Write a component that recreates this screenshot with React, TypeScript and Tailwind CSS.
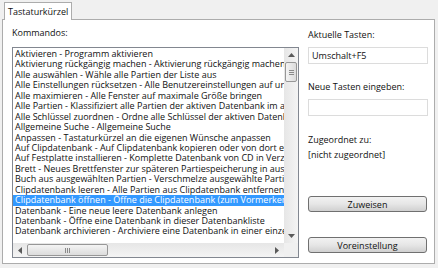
import React from 'react'

const commands = [
  'Aktivieren - Programm aktivieren',
  'Aktivierung rückgängig machen - Aktivierung rückgängig machen',
  'Alle auswählen - Wähle alle Partien der Liste aus',
  'Alle Einstellungen rücksetzen - Alle Benutzereinstellungen auf ursprüngliche Werte',
  'Alle maximieren - Alle Fenster auf maximale Größe bringen',
  'Alle Partien - Klassifiziert alle Partien der aktiven Datenbank im aktuellen Fenster',
  'Alle Schlüssel zuordnen - Ordne alle Schlüssel der aktiven Datenbank zu',
  'Allgemeine Suche - Allgemeine Suche',
  'Anpassen - Tastaturkürzel an die eigenen Wünsche anpassen',
  'Auf Clipdatenbank - Auf Clipdatenbank kopieren oder von dort entfernen',
  'Auf Festplatte installieren - Komplette Datenbank von CD in Verzeichnis kopieren',
  'Brett - Neues Brettfenster zur späteren Partiespeicherung in ausgewählter Datenbank',
  'Buch aus ausgewählten Partien - Verschmelze ausgewählte Partien zu einem Buch',
  'Clipdatenbank leeren - Alle Partien aus Clipdatenbank entfernen',
  'Clipdatenbank öffnen - Öffne die Clipdatenbank (zum Vormerken von Partien)',
  'Datenbank - Eine neue leere Datenbank anlegen',
  'Datenbank - Öffne eine Datenbank in dieser Datenbankliste',
  'Datenbank archivieren - Archiviere eine Datenbank in einer einzelnen Datei',
]

const SELECTED = 14

function Arrow({ dir }: { dir: 'up' | 'down' | 'left' | 'right' }) {
  const pts = {
    up: '0,4 3.5,0 7,4',
    down: '0,0 3.5,4 7,0',
    left: '4,0 0,3.5 4,7',
    right: '0,0 4,3.5 0,7',
  }[dir]
  const vertical = dir === 'up' || dir === 'down'
  return (
    <svg width={vertical ? 7 : 4} height={vertical ? 4 : 7} viewBox={vertical ? '0 0 7 4' : '0 0 4 7'}>
      <polygon points={pts} fill="#5a5a5a" />
    </svg>
  )
}

function Button({ label }: { label: string }) {
  return (
    <div className="h-[16px] w-[119px] rounded-[3px] border border-[#707070] bg-gradient-to-b from-[#f2f2f2] via-[#e6e6e6] to-[#d0d0d0] flex items-center justify-center leading-none">
      {label}
    </div>
  )
}

export default function App() {
  return (
    <div className="w-[438px] h-[268px] bg-[#f0f0f0] overflow-hidden text-[9px] text-[#111] font-['Segoe_UI','Open_Sans',sans-serif]">
      {/* Tab */}
      <div className="flex pl-[4px] pt-[2px]">
        <div className="relative z-10 -mb-px h-[18px] border border-b-0 border-[#acacac] bg-white px-[3px] leading-[17px]">
          Tastaturkürzel
        </div>
      </div>

      {/* Panel */}
      <div className="ml-[2px] w-[433px] h-[245px] border border-[#acacac] bg-white flex">
        {/* Commands */}
        <div className="pl-[9px] pt-[7px]">
          <div className="h-[12px] leading-[12px] mb-[8px]">Kommandos:</div>
          <div className="w-[287px] h-[211px] border border-[#828790] flex flex-col">
            <div className="flex flex-1 min-h-0">
              <div className="flex-1 overflow-hidden pt-px">
                {commands.map((c, i) => (
                  <div
                    key={c}
                    className={
                      i === SELECTED
                        ? 'h-[10.45px] leading-[10.45px] px-[2px] whitespace-nowrap bg-[#3399ff] text-white'
                        : 'h-[10.45px] leading-[10.45px] px-[2px] whitespace-nowrap'
                    }
                  >
                    {c}
                  </div>
                ))}
              </div>
              {/* vertical scrollbar */}
              <div className="w-[14px] bg-gradient-to-r from-[#e6e6e6] to-[#f4f4f4] flex flex-col items-center">
                <div className="h-[14px] flex items-center justify-center">
                  <Arrow dir="up" />
                </div>
                <div className="w-[12px] h-[20px] rounded-[2px] border border-[#979797] bg-gradient-to-r from-[#f4f4f4] to-[#dcdcdc] flex flex-col items-center justify-center gap-[1px]">
                  <div className="w-[5px] h-px bg-[#8a8a8a]" />
                  <div className="w-[5px] h-px bg-[#8a8a8a]" />
                  <div className="w-[5px] h-px bg-[#8a8a8a]" />
                </div>
                <div className="flex-1" />
                <div className="h-[14px] flex items-center justify-center">
                  <Arrow dir="down" />
                </div>
              </div>
            </div>
            {/* horizontal scrollbar */}
            <div className="h-[14px] flex">
              <div className="flex-1 bg-gradient-to-b from-[#e6e6e6] to-[#f4f4f4] flex items-center">
                <div className="w-[14px] flex items-center justify-center">
                  <Arrow dir="left" />
                </div>
                <div className="w-[81px] h-[12px] rounded-[2px] border border-[#979797] bg-gradient-to-b from-[#f4f4f4] to-[#dcdcdc] flex items-center justify-center gap-[1px]">
                  <div className="w-px h-[5px] bg-[#8a8a8a]" />
                  <div className="w-px h-[5px] bg-[#8a8a8a]" />
                  <div className="w-px h-[5px] bg-[#8a8a8a]" />
                </div>
                <div className="flex-1" />
                <div className="w-[14px] flex items-center justify-center">
                  <Arrow dir="right" />
                </div>
              </div>
              <div className="w-[14px] bg-[#f0f0f0]" />
            </div>
          </div>
        </div>

        {/* Right column */}
        <div className="ml-[9px] w-[120px] pt-[9px] flex flex-col">
          <div className="h-[12px] leading-[12px] mb-[6px]">Aktuelle Tasten:</div>
          <div className="h-[17px] border border-[#dcdcdc] px-[3px] leading-[15px]">Umschalt+F5</div>
          <div className="h-[12px] leading-[12px] mt-[17px] mb-[6px]">Neue Tasten eingeben:</div>
          <div className="h-[17px] border border-[#dcdcdc]" />
          <div className="h-[12px] leading-[12px] mt-[18px]">Zugeordnet zu:</div>
          <div className="h-[12px] leading-[12px] mt-[3px]">[nicht zugeordnet]</div>
          <div className="mt-[35px]">
            <Button label="Zuweisen" />
          </div>
          <div className="mt-[25px]">
            <Button label="Voreinstellung" />
          </div>
        </div>
      </div>
    </div>
  )
}
